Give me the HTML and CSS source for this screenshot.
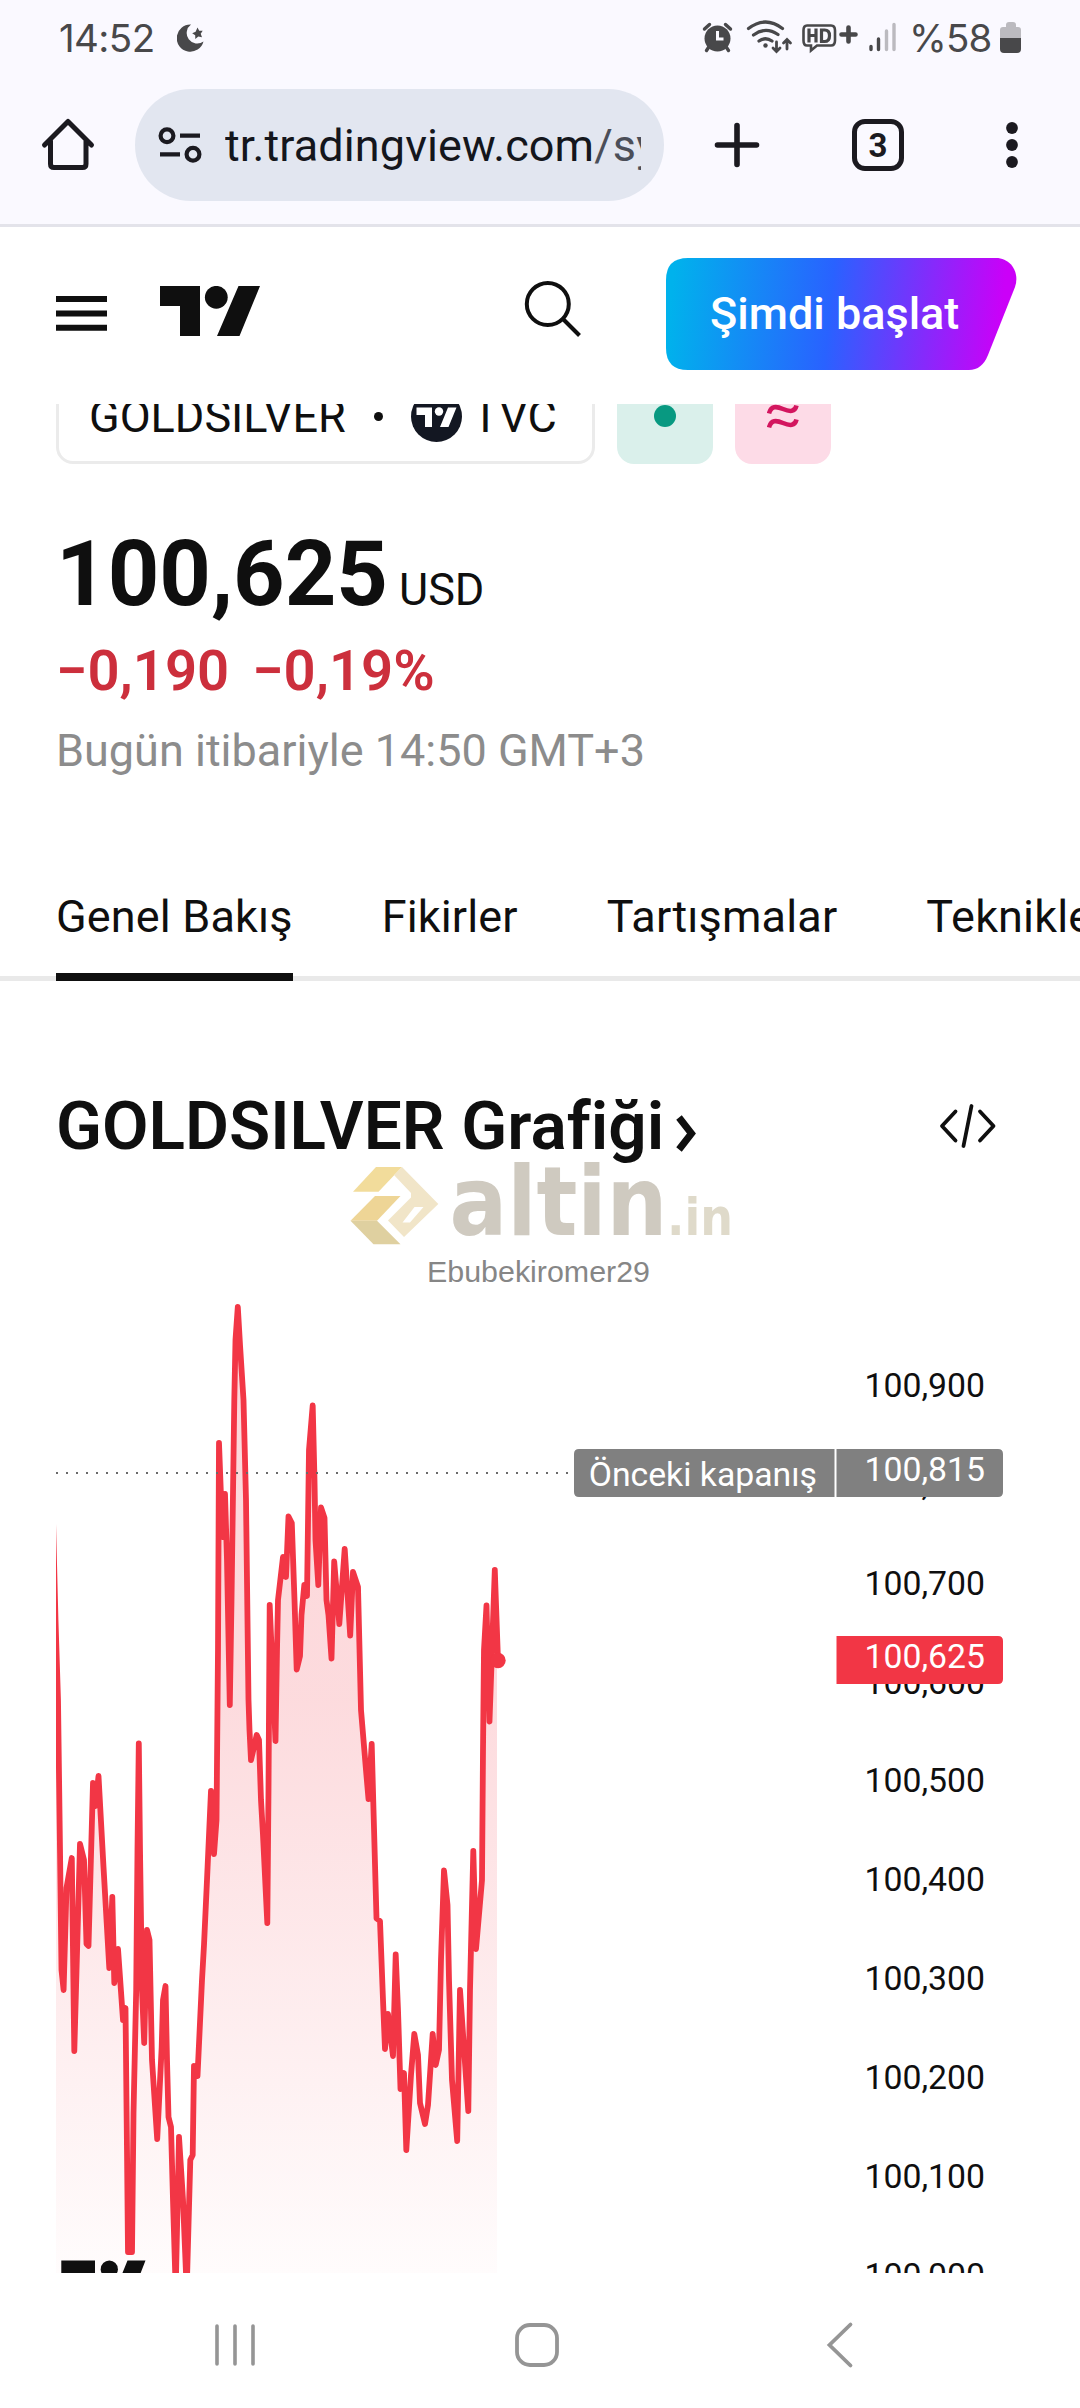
FILE: index.html
```html
<!DOCTYPE html>
<html lang="tr">
<head>
<meta charset="utf-8">
<title>GOLDSILVER</title>
<link rel="stylesheet" href="styles.css">
</head>
<body>
<div class="statusbar">
  <span class="clock">14:52</span>
  <svg class="moon" width="28" height="30" viewBox="0 0 28 30"><path d="M14 1.500A13.600 13.600 0 1 0 26.500 18.500A9.800 9.800 0 1 1 14 1.500Z" fill="#48484a"/><path d="M20.500 4.500l1.700 3.200 3.500.1-2 3 1.300 3.500-3.700-.8-3 2.400-.1-3.700-3-2 3.400-1.500z" fill="#48484a"/></svg>
  <svg class="status-icons" width="200" height="40" viewBox="700 18 200 40" fill="none" stroke="#48484a">
    <circle cx="717.500" cy="38.500" r="13" fill="#48484a" stroke="none"/>
    <path d="M704.500 29l5-4.500M730.500 29l-5-4.500M709.500 46l-3 4.500M725.500 46l3 4.500" stroke-width="3.400" stroke-linecap="round"/>
    <path d="M717.500 31v8h6" stroke="#faf9ff" stroke-width="3"/>
    <g stroke-width="3.200" stroke-linecap="round"><path d="M748.500 28.500q17-13 34 0M753.500 35q12-9 24.500-.5M759 41q6.500-4.500 13 0"/></g>
    <circle cx="765.500" cy="45.500" r="2.200" fill="#48484a" stroke="none"/>
    <path d="M776.500 42v9M773 48l3.500 3.500 3.500-3.500M787 49v-9M783.500 43l3.500-3.500 3.500 3.500" stroke-width="2.800" stroke-linecap="round"/>
    <path d="M807 25.500h24q4 0 4 5v10q0 5-4 5h-14l-6 5v-5h-4q-3.500 0-3.500-5v-10q0-5 3.500-5z" stroke-width="2.600"/>
    <path d="M809 28.500v14M816 28.500v14M809 35.500h7M821.500 30v11.500h3q5 0 5-5.800t-5-5.700z" stroke-width="3.200"/>
    <path d="M841.500 34.500h14M848.500 27.500v14" stroke-width="4.600" stroke-linecap="round"/>
    <g stroke-width="3.400" stroke-linecap="round"><path d="M871 46.500v3M878.500 39v10.500"/><path d="M886.500 31v18.500M894 24.500v25" stroke="#bbbabf"/></g>
  </svg>
  <span class="battery-text">%58</span>
  <svg width="22" height="32" viewBox="1000 22 22 32"><path d="M1000 38V30q0-3 3-3h3v-2q0-3 3-3h4q3 0 3 3v2h2q3 0 3 3v8z" fill="#bbbabf"/><path d="M1000 38h21v11q0 4-4 4h-13q-4 0-4-4z" fill="#48484a"/></svg>
</div>

<div class="toolbar">
  <svg class="home" width="56" height="56" viewBox="40 117 56 56" fill="none" stroke="#1b1a20" stroke-width="5" stroke-linecap="round" stroke-linejoin="round"><path d="M44.500 145L68 121.500 91.500 145M50.500 141v23q0 3.500 3.500 3.500h28.500q3.500 0 3.500-3.500v-23"/></svg>
  <div class="omnibox">
    <svg width="44" height="40" viewBox="158 125 44 40" fill="none" stroke="#1b1a20" stroke-width="4.200"><circle cx="167" cy="135.700" r="6.400"/><circle cx="193" cy="154.300" r="6.400"/><path d="M180 135.700h20M160 154.300h20"/></svg>
    <span class="url">tr.tradingview.com<span class="url-path">/sy</span></span>
  </div>
  <svg class="plus" width="50" height="50" viewBox="0 0 50 50" stroke="#1b1a20" stroke-width="5.600" stroke-linecap="round"><path d="M5.500 25h39M25 5.500v39"/></svg>
  <div class="tabcount">3</div>
  <svg class="more" width="14" height="50" viewBox="0 0 14 50" fill="#1b1a20"><circle cx="7" cy="8" r="5.900"/><circle cx="7" cy="25" r="5.900"/><circle cx="7" cy="42" r="5.900"/></svg>
</div>

<header class="site-header">
  <svg class="burger" width="51" height="36" viewBox="56 295 51 36" fill="#0f0f0f"><path d="M56 296h51v6H56zM56 310.500h51v6H56zM56 324.800h51v6H56z"/></svg>
  <svg class="brand" width="100" height="50" viewBox="0 0 100 50" fill="#0f0f0f"><path d="M0 0h40v50H20V20H0zM78.500 0H100L79.500 50H57z"/><circle cx="56.300" cy="11.300" r="11.400"/></svg>
  <svg class="search" width="60" height="60" viewBox="522 278 60 60" fill="none" stroke="#0f0f0f" stroke-width="4"><circle cx="547.800" cy="304" r="21"/><path d="M563 319l16.500 16.500"/></svg>
  <div class="cta">
    <svg class="cta-shape" width="351" height="112" viewBox="0 0 351 112"><defs><linearGradient id="cta" gradientUnits="userSpaceOnUse" x1="5" y1="40" x2="335" y2="72"><stop offset="0" stop-color="#00b2ec"/><stop offset=".48" stop-color="#2962ff"/><stop offset="1" stop-color="#cb00f8"/></linearGradient></defs><path d="M22 0H330C345 0 354 15 349 29L322 97Q316 112 303 112H22Q0 112 0 90V22Q0 0 22 0Z" fill="url(#cta)"/></svg>
    <span class="cta-label">Şimdi başlat</span>
  </div>
</header>

<main>
  <div class="chips">
    <div class="symbol"><span class="ticker">GOLDSILVER</span><i class="bullet"></i>
      <svg class="badge" width="51" height="51" viewBox="0 0 51 51"><circle cx="25.500" cy="25.500" r="25.500" fill="#131722"/><path d="M5.500 16.500H21V36H14V24H5.500zM37 16.500H45.500L37.500 36H29z" fill="#fff"/><circle cx="28" cy="20.500" r="4.200" fill="#fff"/></svg>
      <span class="exchange">TVC</span></div>
    <div class="chip chip-open"><i></i></div>
    <div class="chip chip-delay"><svg width="32" height="26" viewBox="0 0 32 26" fill="none" stroke="#d3165f" stroke-width="4.600"><path d="M2 10.500C4 3 9 3 16 6S28 9 29.500 2.500M2 24.500C4 17 9 17 16 20S28 23 29.500 16.500"/></svg></div>
  </div>
  <div class="price"><span class="last">100,625</span><span class="currency">USD</span></div>
  <div class="change"><span>−0,190</span><span>−0,19%</span></div>
  <div class="asof">Bugün itibariyle 14:50 GMT+3</div>
  <nav class="tabs"><a class="active">Genel Bakış</a><a>Fikirler</a><a>Tartışmalar</a><a>Teknikler</a></nav>
  <div class="title-row">
    <h2>GOLDSILVER Grafiği</h2>
    <svg class="chevron" width="24" height="40" viewBox="0 0 24 40" fill="none" stroke="#0f0f0f" stroke-width="7"><path d="M4 4.500L16.500 20.500 4 36.500"/></svg>
    <svg class="code" width="58" height="46" viewBox="939 1102 58 46" fill="none" stroke="#0f0f0f" stroke-width="3.800" stroke-linecap="round" stroke-linejoin="round"><path d="M955.500 1110.500L942 1125l13.500 14.500M980 1110.500L993.500 1125 980 1139.500M971.500 1105L963.500 1145"/></svg>
  </div>
  <svg class="watermark" width="400" height="124" viewBox="340 1166 400 124">
    <path d="M353 1191.700L376 1167h26L378.500 1191.700z" fill="#f2dc9b"/>
    <path d="M350.500 1220.700L375 1196h25.500L377 1220.700z" fill="#eed596"/>
    <path d="M350.500 1220.700H377L400.500 1244.300H373.500z" fill="#dfd0a0"/>
    <path fill-rule="evenodd" d="M394 1175L402 1167 438.300 1204 404 1237 388 1220.500 411 1197.500V1193zM414.500 1207L402.500 1222.500H410L423.500 1207z" fill="#f1e5c8"/>
    <text class="wm-name" x="449.500" y="1235" textLength="218" lengthAdjust="spacingAndGlyphs">altin</text>
    <text class="wm-tld" x="667" y="1235" textLength="66" lengthAdjust="spacingAndGlyphs">.in</text>
    <text class="wm-user" x="427" y="1281.700">Ebubekiromer29</text>
  </svg>
  <svg class="chart" width="1080" height="983" viewBox="0 1290 1080 983">
    <defs>
      <linearGradient id="area" gradientUnits="userSpaceOnUse" x1="0" y1="1300" x2="0" y2="2273"><stop offset="0" stop-color="#f23645" stop-opacity=".2"/><stop offset=".41" stop-color="#f23645" stop-opacity=".18"/><stop offset="1" stop-color="#f23645" stop-opacity=".015"/></linearGradient>
      <clipPath id="plot"><rect x="56" y="1290" width="780" height="983"/></clipPath>
    </defs>
    <g clip-path="url(#plot)">
      <path fill="url(#area)" d="M52 1480L55.500 1620 58 1700 60 1850 61.500 1970 63.600 1990 66.500 1888 71.800 1858 74.300 2051 80 1844 84 1860 86.500 1944 88.500 1946 93 1783 95.500 1806 98.500 1776 103.500 1867 109.300 1968 112.300 1897 114.300 1983 118 1949 123 2020 125.500 2008 127 2150 128 2252 132 2252 133.500 2113 136.200 1990 137.500 1850 138.800 1743.500 140 1850 142 1990 144.200 2043 147 1930 149.500 1940 152 2060 157.200 2139 161.700 2047 163 2000 165.500 1986 167 2060 168.500 2117 171 2127 173 2200 175.700 2290 179 2137 183 2200 186.700 2290 190.300 2160 192.700 2155 194 2066 197.500 2076 202 1980 204 1945 207 1880 211 1791 214 1854 216.500 1820 218 1650 219 1443 222.500 1537 225 1494 227 1560 229.800 1705 231.500 1600 234.300 1400 235.500 1340 237.800 1307 240 1345 243.500 1400 246 1500 248.500 1700 249.500 1730 251 1760 256.700 1735 259 1740 261 1800 263 1835 267.300 1923 268.500 1790 269.700 1605 275.500 1741 277 1650 278 1600 283 1557 286 1577 288.500 1516.500 291.800 1523 294.500 1600 296.700 1669.500 300 1656 301.500 1615 304.300 1585 307 1596 309 1450 312.700 1405.500 314.500 1480 315.500 1540 318.300 1585 321 1507.500 324.500 1518 326.500 1600 328.500 1615 331.500 1658.500 334.200 1561.500 339.300 1624 344.700 1549 350.200 1635.500 353 1572 358 1587 361 1710 366 1770 368.500 1799 371.700 1744 373.500 1810 376.500 1918.500 380 1921 383 2000 385 2049 388 2014 393 2056 395.700 1954.500 398 2010 400.500 2089 404 2073 406.300 2150 411 2075 414.300 2034 418 2055 420 2103 425 2124 428 2105 432.700 2034 435.700 2065 439 2050 441 1960 444 1870.500 447.500 1905 449 1980 452 2080 457.200 2141 460 1990 468.300 2111 470 1990 473.300 1851 476 1949 482 1880 483 1750 484 1650 486.500 1605.500 489.500 1721.500 494.800 1570 498 1660.500L497 1660V2273H53z"/>
      <path class="series" d="M52 1480L55.500 1620 58 1700 60 1850 61.500 1970 63.600 1990 66.500 1888 71.800 1858 74.300 2051 80 1844 84 1860 86.500 1944 88.500 1946 93 1783 95.500 1806 98.500 1776 103.500 1867 109.300 1968 112.300 1897 114.300 1983 118 1949 123 2020 125.500 2008 127 2150 128 2252 132 2252 133.500 2113 136.200 1990 137.500 1850 138.800 1743.500 140 1850 142 1990 144.200 2043 147 1930 149.500 1940 152 2060 157.200 2139 161.700 2047 163 2000 165.500 1986 167 2060 168.500 2117 171 2127 173 2200 175.700 2290 179 2137 183 2200 186.700 2290 190.300 2160 192.700 2155 194 2066 197.500 2076 202 1980 204 1945 207 1880 211 1791 214 1854 216.500 1820 218 1650 219 1443 222.500 1537 225 1494 227 1560 229.800 1705 231.500 1600 234.300 1400 235.500 1340 237.800 1307 240 1345 243.500 1400 246 1500 248.500 1700 249.500 1730 251 1760 256.700 1735 259 1740 261 1800 263 1835 267.300 1923 268.500 1790 269.700 1605 275.500 1741 277 1650 278 1600 283 1557 286 1577 288.500 1516.500 291.800 1523 294.500 1600 296.700 1669.500 300 1656 301.500 1615 304.300 1585 307 1596 309 1450 312.700 1405.500 314.500 1480 315.500 1540 318.300 1585 321 1507.500 324.500 1518 326.500 1600 328.500 1615 331.500 1658.500 334.200 1561.500 339.300 1624 344.700 1549 350.200 1635.500 353 1572 358 1587 361 1710 366 1770 368.500 1799 371.700 1744 373.500 1810 376.500 1918.500 380 1921 383 2000 385 2049 388 2014 393 2056 395.700 1954.500 398 2010 400.500 2089 404 2073 406.300 2150 411 2075 414.300 2034 418 2055 420 2103 425 2124 428 2105 432.700 2034 435.700 2065 439 2050 441 1960 444 1870.500 447.500 1905 449 1980 452 2080 457.200 2141 460 1990 468.300 2111 470 1990 473.300 1851 476 1949 482 1880 483 1750 484 1650 486.500 1605.500 489.500 1721.500 494.800 1570 498 1660.500"/>
      <path d="M56 1473H836" stroke="#6a6a6a" stroke-width="2" stroke-dasharray="2 8"/>
      <circle cx="498" cy="1660.500" r="7.700" fill="#f23645"/>
      <path d="M61.300 2260.600H95V2290H61.300zM127.500 2260.600H145.500L134 2290H115.500z" fill="#0f0f0f"/><circle cx="109.300" cy="2269.200" r="8.600" fill="#0f0f0f"/>
    </g>
    <g class="scale">
      <text x="985" y="1396.700">100,900</text><text x="985" y="1495.700">100,800</text><text x="985" y="1594.700">100,700</text><text x="985" y="1693.500">100,600</text><text x="985" y="1792.300">100,500</text><text x="985" y="1891">100,400</text><text x="985" y="1990">100,300</text><text x="985" y="2089">100,200</text><text x="985" y="2188">100,100</text><text x="985" y="2286.500">100,000</text>
    </g>
    <path d="M579 1449H834.500V1497H579q-5 0-5-5v-38q0-5 5-5zM836.500 1449H998q5 0 5 5v38q0 5-5 5H836.500z" fill="#808080"/>
    <path d="M836.500 1636H998q5 0 5 5v38q0 5-5 5H836.500z" fill="#f23645"/>
    <g class="scale on-fill"><text x="985" y="1481">100,815</text><text x="985" y="1667.700">100,625</text><text x="817" y="1486">Önceki kapanış</text></g>
  </svg>
</main>

<footer class="sysnav">
  <svg width="44" height="48" viewBox="0 0 44 48" stroke="#959595" stroke-width="3.600" stroke-linecap="round"><path d="M4 5v38M22 5v38M40 5v38"/></svg>
  <svg class="nav-home" width="48" height="48" viewBox="0 0 48 48" fill="none" stroke="#959595" stroke-width="3.800"><rect x="4" y="4" width="40" height="40" rx="13"/></svg>
  <svg width="28" height="48" viewBox="0 0 28 48" fill="none" stroke="#959595" stroke-width="3.800" stroke-linecap="round"><path d="M24.500 3.500L3.500 24 24.500 44.500"/></svg>
</footer>
</body>
</html>
```
FILE: styles.css
```css
* { box-sizing: border-box; }
body { margin: 0; width: 1080px; height: 2408px; overflow: hidden; background: #fff; color: #0f0f0f; font-family: Roboto, "Noto Sans", sans-serif; }
svg { display: block; flex: none; }

.statusbar { height: 75px; background: #faf9ff; display: flex; align-items: center; padding-left: 59px; color: #48484a; font-family: Inter, Roboto, sans-serif; font-size: 38.5px; }
.clock { flex: none; width: 118px; letter-spacing: -0.6px; }
.status-icons { margin-left: 495px; }
.battery-text { flex: none; margin-left: 9px; width: 91px; letter-spacing: -0.8px; }

.toolbar { height: 152px; padding: 14px 0 23px 40px; background: #faf9ff; border-bottom: 3px solid #e3e3ea; display: flex; align-items: center; }
.omnibox { margin-left: 39px; width: 529px; height: 112px; border-radius: 56px; background: #e2e6f0; display: flex; align-items: center; padding: 0 23px; gap: 23px; }
.url { flex: 1; overflow: hidden; white-space: nowrap; font-size: 45px; color: #14161c; letter-spacing: 0.1px; }
.url-path { color: #4b4e58; }
.plus { margin-left: 48px; }
.tabcount { margin-left: 90px; width: 52px; height: 52px; border: 5px solid #1b1a20; border-radius: 13px; display: flex; align-items: center; justify-content: center; font-size: 33px; font-weight: 700; color: #1b1a20; }
.more { margin-left: 101px; }

.site-header { height: 177px; padding: 31px 0 35px 56px; display: flex; align-items: center; }
.brand { margin: -6px 0 0 53px; }
.burger { margin-top: -2px; }
.search { margin: -12px 84px 0 262px; }
.cta { display: grid; width: 351px; height: 112px; }
.cta-shape, .cta-label { grid-area: 1 / 1; }
.cta-label { color: #fff; font-size: 45px; font-weight: 500; line-height: 112px; padding-left: 44px; }

.chips { height: 60px; overflow: hidden; display: flex; align-items: flex-end; padding-left: 56px; }
.symbol { flex: none; width: 539px; height: 96px; border: 3px solid #ebebeb; border-radius: 17px; display: flex; align-items: center; padding-left: 30px; font-size: 45px; }
.ticker { width: 285px; white-space: nowrap; }
.bullet { width: 9px; height: 9px; border-radius: 50%; background: #0f0f0f; }
.badge { margin: 0 10px 0 28px; }
.chip { flex: none; width: 96px; height: 96px; border-radius: 17px; margin-left: 22px; display: flex; align-items: center; justify-content: center; }
.chip-open { background: #daf0eb; }
.chip-open i { width: 22px; height: 22px; border-radius: 50%; background: #089981; }
.chip-delay { background: #fddbe7; }

.price { margin-top: 66px; padding-left: 56px; display: flex; align-items: baseline; line-height: 90px; height: 90px; }
.last { font-size: 90px; font-weight: 700; }
.currency { font-size: 45px; margin-left: 11px; }
.change { margin-top: 18px; padding-left: 56px; display: flex; gap: 23px; font-size: 56.25px; line-height: 66px; font-weight: 600; color: #cc2f3c; }
.asof { margin-top: 17px; padding-left: 56px; font-size: 45px; line-height: 60px; color: #8c8c8c; }

.tabs { margin-top: 105px; height: 95px; padding-left: 56px; display: flex; gap: 89px; overflow: hidden; font-size: 45px; line-height: 62px; letter-spacing: 0.15px; white-space: nowrap; box-shadow: inset 0 -5px #e9e9e9; }
.tabs a { flex: none; height: 95px; }
.tabs .active { border-bottom: 8px solid #0f0f0f; }

.title-row { margin-top: 105px; height: 80px; padding-left: 56px; display: flex; align-items: center; }
h2 { margin: 0; font-size: 67.5px; line-height: 80px; font-weight: 600; white-space: nowrap; }
.chevron { margin: 13px 0 0 11px; }
.code { margin-left: auto; margin-right: 83px; }

.watermark { margin-left: 340px; overflow: visible; }
.wm-name, .wm-tld { font-family: "DejaVu Sans Condensed", "DejaVu Sans", sans-serif; font-stretch: condensed; font-weight: 700; }
.wm-name { font-size: 96px; fill: #cfcac0; }
.wm-tld { font-size: 51px; fill: #dfdaca; }
.wm-user { font-family: "Liberation Sans", sans-serif; font-size: 30.4px; fill: #868686; }

.series { fill: none; stroke: #f23645; stroke-width: 5.8; stroke-linejoin: round; stroke-linecap: round; }
.scale text { font-size: 33.75px; text-anchor: end; fill: #0f0f0f; }
.scale.on-fill text { fill: #fff; }

.sysnav { height: 135px; padding: 9px 226px 0 213px; display: flex; align-items: center; justify-content: space-between; }
.nav-home { margin-right: 10px; }
```
